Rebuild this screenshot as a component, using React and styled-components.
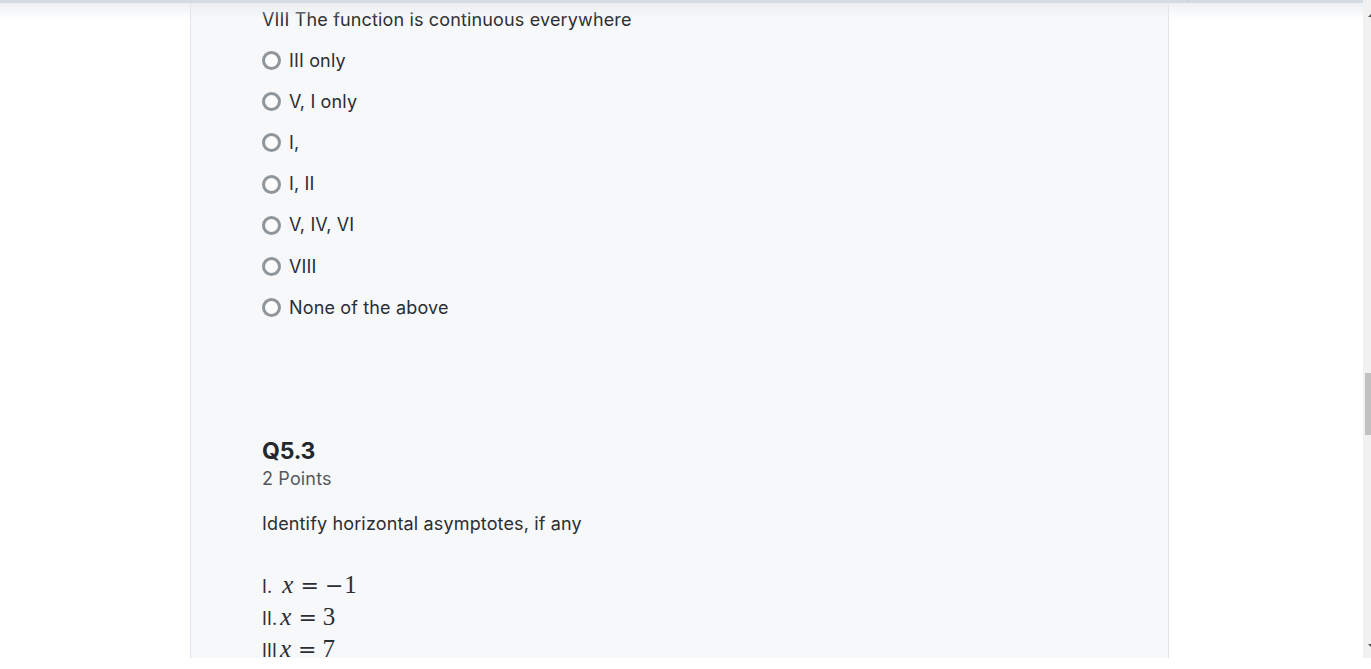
import React from "react";
import styled, { createGlobalStyle } from "styled-components";

const GlobalStyle = createGlobalStyle`
  html, body { margin: 0; padding: 0; background: #ffffff; overflow: hidden; }
  body { font-family: Inter, "Open Sans", Arial, sans-serif; color: #2b2e33; }
`;

const Viewport = styled.div`
  width: 1371px;
  height: 669px;
  background: #fff;
  display: flex;
  flex-direction: column;
`;

const Frame = styled.div`
  position: relative;
  height: 658px;
  display: flex;
  overflow: hidden;
`;

const HeaderEdge = styled.div`
  position: absolute;
  left: 0;
  right: 8px;
  top: 0;
  height: 16px;
  pointer-events: none;
  border-top: 3px solid #d5dbe3;
  background: linear-gradient(to bottom, rgba(230, 233, 238, 0.7), rgba(255, 255, 255, 0));
  &::after {
    content: "";
    position: absolute;
    left: 1187px;
    top: -3px;
    width: 1px;
    height: 2px;
    background: #c6ccd4;
  }
`;

const Gutter = styled.div`
  width: ${(p) => p.$w || "auto"};
  flex: ${(p) => (p.$grow ? 1 : "none")};
  background: #fff;
`;

const Panel = styled.main`
  width: 979px;
  flex: none;
  box-sizing: border-box;
  background: #f7f8fa;
  border-left: 1px solid #e0e3e9;
  border-right: 1px solid #e0e3e9;
  padding: 8px 0 0 71px;
  font-size: 18px;
  letter-spacing: 0.15px;
`;

const Line = styled.div`
  line-height: 24px;
  height: 24px;
`;

const Options = styled.div`
  margin-top: 8px;
  display: flex;
  flex-direction: column;
`;

const Option = styled.label`
  height: 41.2px;
  display: flex;
  align-items: center;
  gap: 8px;
  line-height: 24px;
`;

const Radio = styled.span`
  width: 19px;
  height: 19px;
  box-sizing: border-box;
  border-radius: 50%;
  border: 3px solid #8f969b;
  background: #fbfbfc;
  flex: none;
`;

const QTitle = styled.h2`
  margin: 108px 0 0;
  font-size: 23px;
  font-weight: 700;
  line-height: 30px;
  color: #24272b;
  letter-spacing: -0.2px;
`;

const Points = styled.div`
  margin-top: 1px;
  line-height: 24px;
  color: #54585e;
`;

const Prompt = styled.p`
  margin: 21px 0 33px;
  line-height: 24px;
`;

const MathLine = styled.div`
  height: 32px;
  line-height: 32px;
  display: flex;
  align-items: baseline;
  white-space: pre;
`;

const Label = styled.span`
  margin-right: ${(p) => p.$gap || "4px"};
`;

const MathVar = styled.span`
  font-family: "Liberation Serif", "DejaVu Serif", serif;
  font-style: italic;
  font-size: 25px;
  letter-spacing: 0;
`;

const MathRel = styled.span`
  font-family: "DejaVu Serif", "Liberation Serif", serif;
  font-size: 22px;
  letter-spacing: 0;
  margin: 0 6px 0 7px;
`;

const MathNum = styled.span`
  font-family: "Liberation Serif", "DejaVu Serif", serif;
  font-size: 25px;
  letter-spacing: 0;
`;

const Minus = styled.span`
  font-family: "DejaVu Serif", "Liberation Serif", serif;
  font-size: 22px;
  margin-right: 1px;
`;

const Scrollbar = styled.div`
  width: 8px;
  flex: none;
  background: #f1f1f1;
  display: flex;
  flex-direction: column;
  align-items: flex-end;
`;

const Arrow = styled.span`
  width: 0;
  height: 0;
  border-left: 3px solid transparent;
  border-right: 3px solid transparent;
  ${(p) => (p.$down ? "border-top: 3px solid #505050;" : "border-bottom: 3px solid #505050;")}
  margin: ${(p) => p.$m};
  transform: translateX(3px);
`;

const Thumb = styled.div`
  width: 6px;
  height: 62px;
  background: #c1c1c1;
  margin-top: ${(p) => p.$top};
`;

const options = ["III only", "V, I only", "I,", "I, II", "V, IV, VI", "VIII", "None of the above"];

const mathRows = [
  { label: "I.", gap: "10px", neg: true, num: "1" },
  { label: "II.", gap: "3px", num: "3" },
  { label: "III", gap: "3px", num: "7" },
];

export default function App() {
  return (
    <Viewport>
      <GlobalStyle />
      <Frame>
        <Gutter $w="190px" />
        <Panel>
          <Line>VIII The function is continuous everywhere</Line>
          <Options>
            {options.map((o) => (
              <Option key={o}>
                <Radio />
                {o}
              </Option>
            ))}
          </Options>
          <QTitle>Q5.3</QTitle>
          <Points>2 Points</Points>
          <Prompt>Identify horizontal asymptotes, if any</Prompt>
          {mathRows.map((r) => (
            <MathLine key={r.label}>
              <Label $gap={r.gap}>{r.label}</Label>
              <MathVar>x</MathVar>
              <MathRel>=</MathRel>
              <MathNum>
                {r.neg && <Minus>{"\u2212"}</Minus>}
                {r.num}
              </MathNum>
            </MathLine>
          ))}
        </Panel>
        <Gutter $grow />
        <Scrollbar>
          <Arrow $m="14px 0 0" />
          <Thumb $top="356px" />
          <Arrow $down $m="auto 0 11px" />
        </Scrollbar>
        <HeaderEdge />
      </Frame>
    </Viewport>
  );
}
